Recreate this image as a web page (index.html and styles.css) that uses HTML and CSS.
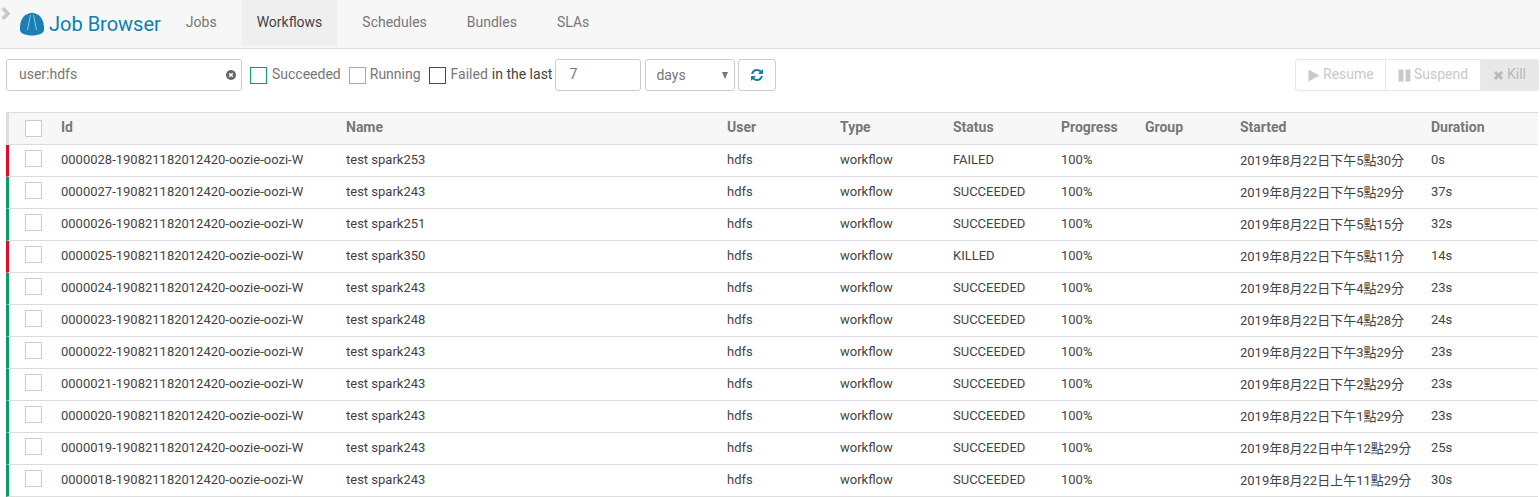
FILE: index.html
```html
<!DOCTYPE html>
<html>

<head>
  <meta charset="utf-8">
  <title>Job Browser</title>
  <link rel="stylesheet" href="styles.css">
</head>

<body>
  <div id="navbar">
    <svg class="chevron" width="10" height="13" viewBox="0 0 10 13"><path d="M3 0 L9.5 6.5 L3 13 L0.5 10.5 L4.5 6.5 L0.5 2.5 Z" fill="#c8c8c8"/></svg>
    <svg class="logo" width="24" height="24" viewBox="0 0 24 24">
      <path d="M9 1.5 Q12 0 15 1.5 C21 3 24.5 9 24 18 C24 21 19 23.5 12 23.5 C5 23.5 0 21 0 18 C-0.5 9 3 3 9 1.5 Z" fill="#1b7fb5"/>
      <path d="M10.5 3 L7.5 18 M13.5 3 L16.5 18" stroke="#8fc3dd" stroke-width="1"/>
    </svg>
    <span class="brand">Job Browser</span>
    <a class="tab tab-first">Jobs</a>
    <a class="tab active">Workflows</a>
    <a class="tab">Schedules</a>
    <a class="tab">Bundles</a>
    <a class="tab">SLAs</a>
  </div>

  <div id="toolbar">
    <div class="search">
      <span>user:hdfs</span>
      <svg width="10" height="10" viewBox="0 0 10 10"><circle cx="5" cy="5" r="5" fill="#666"/><path d="M3.2 3.2 L6.8 6.8 M6.8 3.2 L3.2 6.8" stroke="#fff" stroke-width="1.4"/></svg>
    </div>
    <span class="box box-green"></span><span class="lbl lbl-s">Succeeded</span>
    <span class="box box-orange"></span><span class="lbl lbl-r">Running</span>
    <span class="box box-red"></span><span class="lbl lbl-f">Failed</span><span class="lbl-last">in the last</span>
    <div class="input-num">7</div>
    <div class="input-sel"><span>days</span><i class="caret"></i></div>
    <div class="btn-refresh">
      <svg width="14" height="14" viewBox="0 0 1792 1792"><path fill="#0b7fad" d="M1639 1056q0 5-1 7-64 268-268 434.5t-478 166.5q-146 0-282.5-55t-243.5-157l-129 129q-19 19-45 19t-45-19-19-45v-448q0-26 19-45t45-19h448q26 0 45 19t19 45-19 45l-137 137q71 66 161 102t187 36q134 0 250-65t186-179q11-17 53-117 8-23 30-23h192q13 0 22.5 9.5t9.5 22.5zm25-800v448q0 26-19 45t-45 19h-448q-26 0-45-19t-19-45 19-45l138-138q-148-137-349-137-134 0-250 65t-186 179q-11 17-53 117-8 23-30 23h-199q-13 0-22.5-9.5t-9.5-22.5v-7q65-268 270-434.5t480-166.5q146 0 284 55.5t245 156.5l130-129q19-19 45-19t45 19 19 45z"/></svg>
    </div>
    <div class="actions">
      <div class="act act-resume"><svg width="12" height="13" viewBox="0 0 12 13"><path d="M0.5 0.5 L11.5 6.5 L0.5 12.5 Z" fill="#c9c9c9"/></svg><span>Resume</span></div>
      <div class="act act-suspend"><svg width="13" height="13" viewBox="0 0 13 13"><path d="M0.5 0.5 H5.5 V12.5 H0.5 Z M7.5 0.5 H12.5 V12.5 H7.5 Z" fill="#c9c9c9"/></svg><span>Suspend</span></div>
      <div class="act act-kill"><svg width="11" height="11" viewBox="0 0 11 11"><path d="M2 2 L9 9 M9 2 L2 9" stroke="#b9b9b9" stroke-width="3"/></svg><span>Kill</span></div>
    </div>
  </div>

  <table id="jobs">
    <colgroup>
      <col class="c-check"><col class="c-id"><col class="c-name"><col class="c-user"><col class="c-type"><col class="c-status"><col class="c-progress"><col class="c-group"><col class="c-started"><col class="c-duration">
    </colgroup>
    <thead>
      <tr>
        <th><span class="check"></span></th><th>Id</th><th>Name</th><th>User</th><th>Type</th><th>Status</th><th>Progress</th><th>Group</th><th>Started</th><th>Duration</th>
      </tr>
    </thead>
    <tbody>
      <tr class="bad"><td><span class="check"></span></td><td>0000028-190821182012420-oozie-oozi-W</td><td>test spark253</td><td>hdfs</td><td>workflow</td><td>FAILED</td><td>100%</td><td></td><td>2019年8月22日下午5點30分</td><td>0s</td></tr>
      <tr class="ok"><td><span class="check"></span></td><td>0000027-190821182012420-oozie-oozi-W</td><td>test spark243</td><td>hdfs</td><td>workflow</td><td>SUCCEEDED</td><td>100%</td><td></td><td>2019年8月22日下午5點29分</td><td>37s</td></tr>
      <tr class="ok"><td><span class="check"></span></td><td>0000026-190821182012420-oozie-oozi-W</td><td>test spark251</td><td>hdfs</td><td>workflow</td><td>SUCCEEDED</td><td>100%</td><td></td><td>2019年8月22日下午5點15分</td><td>32s</td></tr>
      <tr class="bad"><td><span class="check"></span></td><td>0000025-190821182012420-oozie-oozi-W</td><td>test spark350</td><td>hdfs</td><td>workflow</td><td>KILLED</td><td>100%</td><td></td><td>2019年8月22日下午5點11分</td><td>14s</td></tr>
      <tr class="ok"><td><span class="check"></span></td><td>0000024-190821182012420-oozie-oozi-W</td><td>test spark243</td><td>hdfs</td><td>workflow</td><td>SUCCEEDED</td><td>100%</td><td></td><td>2019年8月22日下午4點29分</td><td>23s</td></tr>
      <tr class="ok"><td><span class="check"></span></td><td>0000023-190821182012420-oozie-oozi-W</td><td>test spark248</td><td>hdfs</td><td>workflow</td><td>SUCCEEDED</td><td>100%</td><td></td><td>2019年8月22日下午4點28分</td><td>24s</td></tr>
      <tr class="ok"><td><span class="check"></span></td><td>0000022-190821182012420-oozie-oozi-W</td><td>test spark243</td><td>hdfs</td><td>workflow</td><td>SUCCEEDED</td><td>100%</td><td></td><td>2019年8月22日下午3點29分</td><td>23s</td></tr>
      <tr class="ok"><td><span class="check"></span></td><td>0000021-190821182012420-oozie-oozi-W</td><td>test spark243</td><td>hdfs</td><td>workflow</td><td>SUCCEEDED</td><td>100%</td><td></td><td>2019年8月22日下午2點29分</td><td>23s</td></tr>
      <tr class="ok"><td><span class="check"></span></td><td>0000020-190821182012420-oozie-oozi-W</td><td>test spark243</td><td>hdfs</td><td>workflow</td><td>SUCCEEDED</td><td>100%</td><td></td><td>2019年8月22日下午1點29分</td><td>23s</td></tr>
      <tr class="ok"><td><span class="check"></span></td><td>0000019-190821182012420-oozie-oozi-W</td><td>test spark243</td><td>hdfs</td><td>workflow</td><td>SUCCEEDED</td><td>100%</td><td></td><td>2019年8月22日中午12點29分</td><td>25s</td></tr>
      <tr class="ok"><td><span class="check"></span></td><td>0000018-190821182012420-oozie-oozi-W</td><td>test spark243</td><td>hdfs</td><td>workflow</td><td>SUCCEEDED</td><td>100%</td><td></td><td>2019年8月22日上午11點29分</td><td>30s</td></tr>
    </tbody>
  </table>
</body>

</html>
```

FILE: styles.css
```css
html, body {
  overflow: hidden;
}

body {
  margin: 0;
  height: 497px;
  font-family: Roboto, "Noto Sans CJK TC", sans-serif;
  font-size: 13px;
  color: #444;
  background: #fff;
}

#navbar {
  position: relative;
  box-sizing: border-box;
  display: flex;
  align-items: flex-start;
  gap: 10px;
  height: 49px;
  padding-left: 20px;
  background: #f7f7f7;
  border-bottom: 1px solid #ddd;
}

.chevron {
  position: absolute;
  top: 7px;
  left: 1px;
}

.logo {
  margin: 12px -5px 0 0;
}

.brand {
  margin-top: 13px;
  font-size: 20px;
  line-height: 23px;
  color: #0b7fad;
}

.tab {
  display: block;
  height: 46px;
  line-height: 45px;
  padding: 0 15px;
  font-size: 14px;
  color: #777;
}

.tab.active {
  color: #444;
  background: #f0eff0;
}

#toolbar {
  display: flex;
  align-items: center;
  height: 32px;
  margin: 10px 1px 0 6px;
}

.search {
  box-sizing: border-box;
  display: flex;
  align-items: center;
  justify-content: space-between;
  width: 236px;
  height: 32px;
  padding: 0 5px 0 12px;
  border: 1px solid #ccc;
  border-radius: 3px;
  font-size: 14px;
  color: #777;
}

.search span {
  margin-bottom: 2px;
}

.box {
  box-sizing: border-box;
  width: 17px;
  height: 17px;
  background: #fff;
  border: 1px solid #ccc;
}

.box-green {
  margin-left: 8px;
  border-color: #0b9b6b;
}

.box-orange {
  margin-left: 8px;
  border-color: #e0a040;
}

.box-red {
  margin-left: 8px;
  border-color: #c5112c;
}

.lbl {
  margin: 0 0 2px 5px;
  font-size: 14px;
  color: #777;
}

.lbl-r {
  margin-left: 4px;
}

.lbl-last {
  margin: 0 0 2px 4px;
  font-size: 14px;
  color: #444;
}

.input-num {
  box-sizing: border-box;
  width: 86px;
  height: 32px;
  line-height: 28px;
  margin-left: 3px;
  padding-left: 13px;
  border: 1px solid #ccc;
  border-radius: 3px;
  font-size: 14px;
  color: #777;
}

.input-sel {
  box-sizing: border-box;
  display: flex;
  align-items: center;
  justify-content: space-between;
  width: 90px;
  height: 32px;
  margin-left: 4px;
  padding: 0 6px 0 10px;
  border: 1px solid #ccc;
  border-radius: 3px;
  font-size: 14px;
  color: #777;
}

.caret {
  width: 0;
  height: 0;
  border-left: 3.5px solid transparent;
  border-right: 3.5px solid transparent;
  border-top: 7px solid #777;
}

.btn-refresh {
  box-sizing: border-box;
  display: flex;
  align-items: center;
  justify-content: center;
  width: 38px;
  height: 32px;
  margin-left: 3px;
  border: 1px solid #ccc;
  border-radius: 3px;
}

.actions {
  display: flex;
  height: 32px;
  margin-left: auto;
  font-size: 14px;
  color: #c9c9c9;
}

.act {
  box-sizing: border-box;
  display: flex;
  align-items: center;
  gap: 3px;
  border: 1px solid #e6e6e6;
  border-left: none;
}

.act span {
  margin-bottom: 2px;
}

.act-resume {
  width: 91px;
  padding-left: 12px;
  border-left: 1px solid #e6e6e6;
  border-radius: 3px 0 0 3px;
}

.act-suspend {
  width: 95px;
  padding-left: 12px;
}

.act-kill {
  width: 58px;
  padding-left: 12px;
  background: #e8e8e8;
  color: #b9b9b9;
  border-color: #e8e8e8;
  border-radius: 0 3px 3px 0;
}

#jobs {
  table-layout: fixed;
  border-collapse: separate;
  border-spacing: 0;
  width: 1532px;
  margin: 21px 0 0 6px;
  font-size: 13px;
}

.c-check { width: 47px; }
.c-id { width: 285px; }
.c-name { width: 381px; }
.c-user { width: 113px; }
.c-type { width: 113px; }
.c-status { width: 108px; }
.c-progress { width: 84px; }
.c-group { width: 95px; }
.c-started { width: 191px; }
.c-duration { width: 115px; }

#jobs th, #jobs td {
  box-sizing: border-box;
  height: 32px;
  padding: 0 8px 2px;
  text-align: left;
  border-bottom: 1px solid #ddd;
  white-space: nowrap;
  overflow: hidden;
}

#jobs th {
  height: 33px;
  padding-bottom: 4px;
  background: #f7f7f7;
  color: #777;
  font-size: 14px;
  font-weight: 700;
  border-top: 1px solid #ddd;
}

#jobs th:first-child, #jobs td:first-child {
  padding: 0 0 0 16px;
  border-left: 3px solid #ddd;
}

#jobs tr.bad td:first-child {
  border-left-color: #d5102e;
}

#jobs tr.ok td:first-child {
  border-left-color: #0b9b6b;
}

.check {
  display: block;
  box-sizing: border-box;
  width: 17px;
  height: 17px;
  background: #fff;
  border: 1px solid #ccc;
}

td .check {
  margin-top: -4px;
}
```
